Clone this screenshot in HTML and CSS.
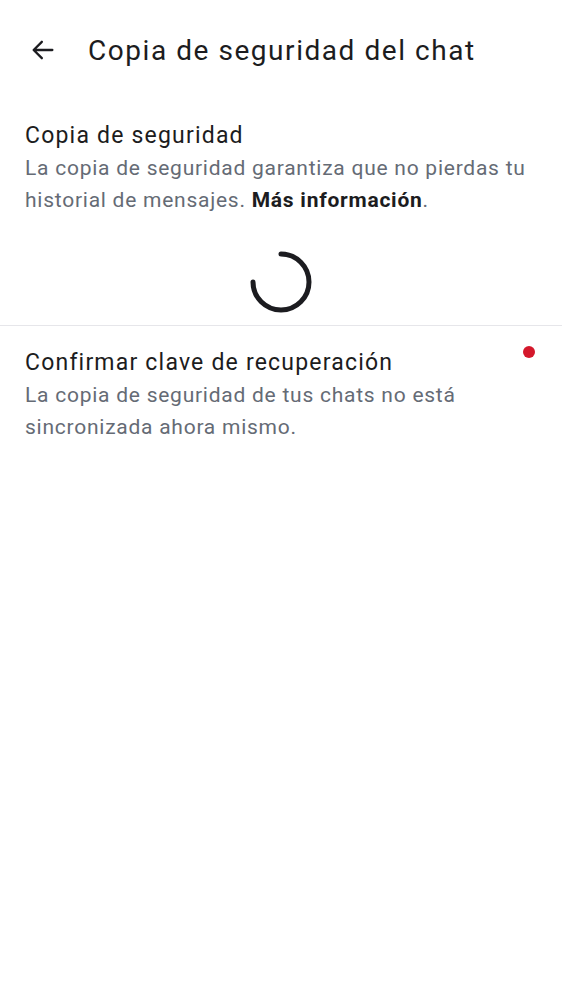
FILE: index.html
```html
<!DOCTYPE html>
<html lang="es">
<head>
<meta charset="utf-8">
<link rel="stylesheet" href="styles.css">
</head>
<body>
<div class="app">
  <header class="topbar">
    <svg class="back" width="28" height="28" viewBox="0 0 24 24"><path d="M20 12H4.5M11 5l-7 7 7 7" fill="none" stroke="#1c1c20" stroke-width="2" stroke-linecap="round" stroke-linejoin="round"/></svg>
    <h1 class="title">Copia de seguridad del chat</h1>
  </header>
  <section class="item">
    <div class="item-title">Copia de seguridad</div>
    <div class="item-desc">La copia de seguridad garantiza que no pierdas tu historial de mensajes. <b>Más información</b>.</div>
  </section>
  <div class="spinner-wrap">
    <svg width="66" height="66" viewBox="0 0 66 66"><path d="M33 5 A28 28 0 1 1 5 33" fill="none" stroke="#1c1c20" stroke-width="5" stroke-linecap="round"/></svg>
  </div>
  <div class="divider"></div>
  <section class="item item2">
    <div class="item-title">Confirmar clave de recuperación</div>
    <div class="item-desc">La copia de seguridad de tus chats no está sincronizada ahora mismo.</div>
    <span class="dot"></span>
  </section>
</div>
</body>
</html>
```
FILE: styles.css
```css
* { box-sizing: border-box; }
html, body { margin: 0; padding: 0; background: #fff; }
body { font-family: Roboto, "Noto Sans", sans-serif; color: #1c1c20; }
.app { width: 562px; }
.topbar { display: flex; align-items: center; height: 100px; padding-left: 29px; }
.back { flex: none; }
.title { margin: 0 0 0 31px; font-size: 28px; font-weight: 400; letter-spacing: 1.55px; }
.item { position: relative; padding: 0 25px; }
.item-title { font-size: 23px; line-height: 32px; padding-top: 20px; letter-spacing: 1.2px; }
.item-desc { font-size: 21px; line-height: 31.5px; padding-top: 1px; color: #656b75; letter-spacing: 0.75px; }
.item-desc b { color: #1c1c20; font-weight: 700; }
.spinner-wrap { display: flex; justify-content: center; padding: 33px 0 10px; }
.divider { height: 1px; background: #e6e6ea; }
.item2 .item-title { padding-top: 21px; }
.dot { position: absolute; right: 27px; top: 20px; width: 12px; height: 12px; border-radius: 50%; background: #d4182b; }
```
